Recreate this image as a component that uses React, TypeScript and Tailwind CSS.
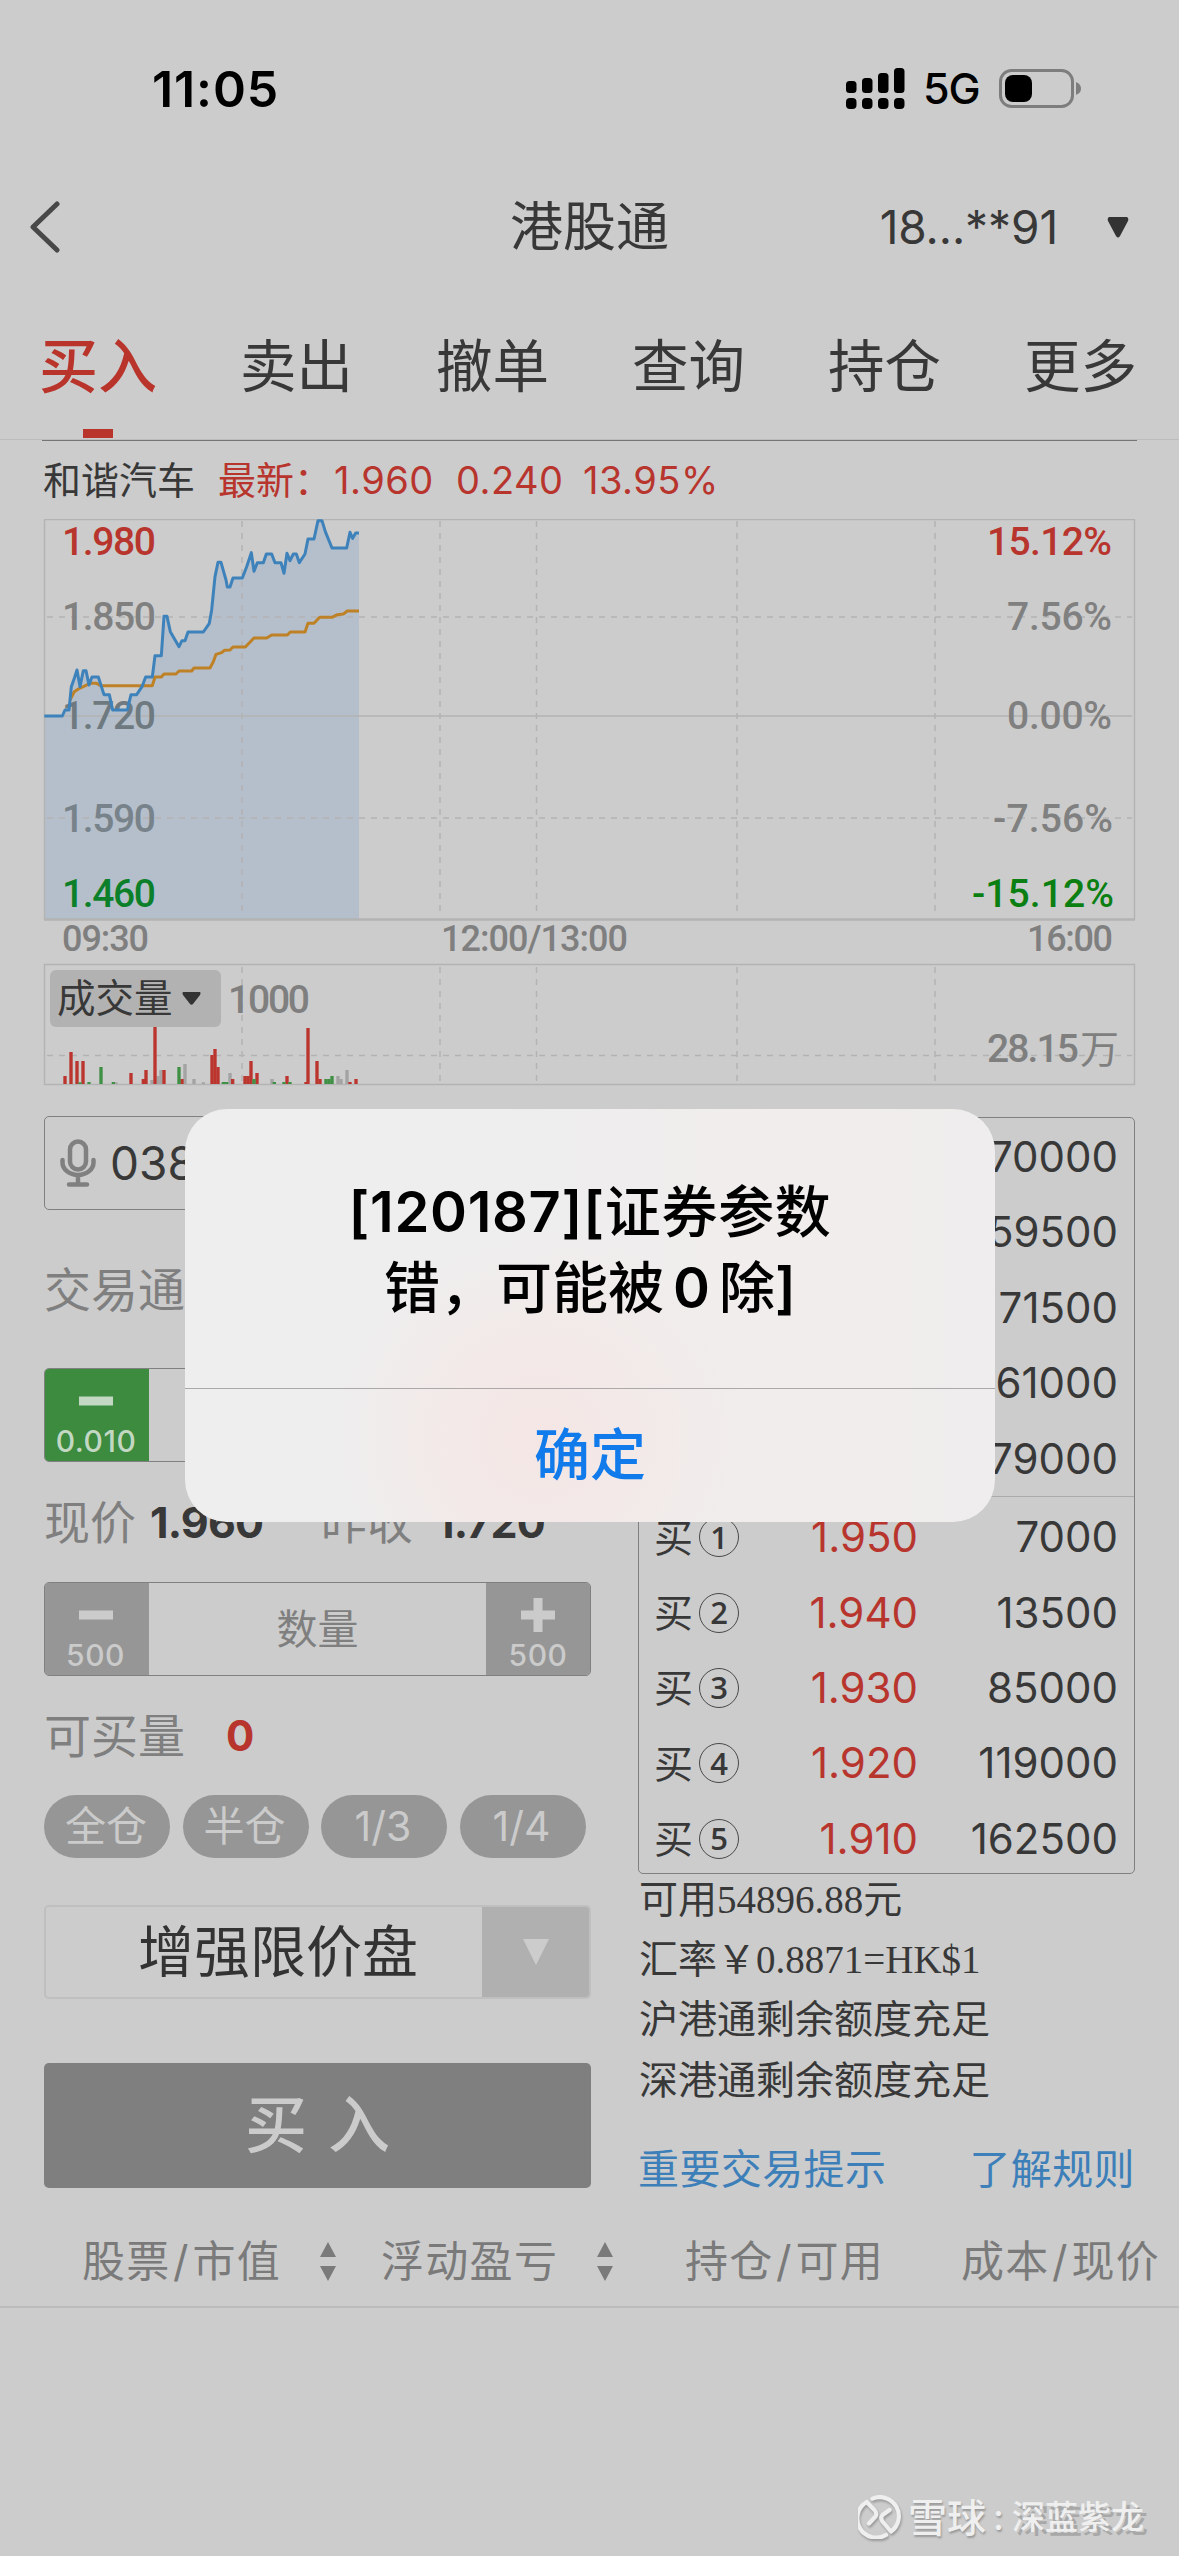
import React from "react";

const SANS = "font-['Inter','Noto_Sans_CJK_SC',sans-serif]";

const PRICE_LINE =
  "43,648 97,648 105,630 117,630 124,560 133,535 141,510 150,560 160,512 168,512 177,555 186,531 205,531 222,584 238,584 248,630 292,630 303,584 320,584 336,560 347,531 367,531 375,467 394,467 402,349 411,349 421,395 447,440 456,422 465,422 474,396 520,396 538,370 545,330 555,230 564,187 573,187 588,240 592,261 600,261 609,234 637,234 650,200 664,158 672,214 682,188 700,188 709,162 725,162 735,188 753,188 762,220 771,160 780,182 790,162 799,162 808,188 825,162 834,117 852,117 864,62 876,62 886,95 906,144 950,144 960,97 968,115 977,99 987,99";

const AVERAGE_LINE =
  "120,600 133,575 145,567 160,560 180,550 200,550 212,557 367,557 375,531 394,531 402,522 438,522 447,513 485,513 492,504 540,504 550,485 558,463 575,458 583,451 600,450 609,441 646,441 672,414 710,414 725,405 772,405 781,396 825,396 834,370 852,370 869,352 906,352 922,344 940,342 952,333 987,333";

const GREY = "#a3a3a3";
const GREEN = "#3f8f45";
const RED = "#bb352e";

const VOLUMES: [number, number, string][] = [
  [258, 547, GREY], [366, 540, GREY], [384, 528, GREY], [393, 510, GREY], [465, 492, GREY], [492, 537, GREY],
  [520, 547, GREY], [600, 519, GREY], [726, 537, GREY], [924, 528, GREY], [933, 537, GREY], [951, 510, GREY],
  [105, 528, RED], [123, 456, RED], [141, 483, RED], [159, 483, RED], [303, 519, RED], [340, 537, RED],
  [348, 510, RED], [375, 381, RED], [402, 510, RED], [456, 537, RED], [546, 465, RED], [555, 447, RED],
  [564, 501, RED], [608, 537, RED], [645, 528, RED], [654, 528, RED], [663, 483, RED], [681, 519, RED],
  [771, 528, RED], [828, 546, RED], [834, 384, RED], [861, 483, RED], [870, 537, RED], [960, 546, RED],
  [978, 537, RED],
  [150, 547, GREEN], [177, 546, GREEN], [213, 501, GREEN], [250, 546, GREEN], [447, 501, GREEN],
  [580, 546, GREEN], [590, 546, GREEN], [672, 537, GREEN], [733, 546, GREEN], [762, 546, GREEN],
  [780, 546, GREEN], [888, 537, GREEN], [897, 537, GREEN], [906, 528, GREEN],
];

// text, left, baseline, width, colour, weight
const CHART_LABELS: [string, number, number, number, string, number][] = [
  ["1.980", 62, 555, 94, "#b8352e", 500],
  ["1.850", 62, 630, 94, "#808080", 500],
  ["1.720", 62, 729, 94, "#6f7a80", 500],
  ["1.590", 62, 832, 94, "#78828a", 500],
  ["1.460", 62, 907, 94, "#0b7f2a", 500],
  ["15.12%", 987, 555, 125, "#b8352e", 500],
  ["7.56%", 1007, 630, 105, "#808080", 500],
  ["0.00%", 1007, 729, 105, "#808080", 500],
  ["-7.56%", 993, 832, 120, "#808080", 500],
  ["-15.12%", 972, 907, 142, "#0b7f12", 500],
];

function Chart() {
  return (
    <div className="relative ml-[43px] h-[567px] w-[1093px]">
      <svg className="block h-[567px] w-[1093px]" viewBox="43 519 1093 567">
        <polygon
          points={PRICE_LINE + " 987,1258 43,1258"}
          transform="translate(30 500) scale(0.33333)"
          fill="#b4bfcb"
        />
        <g fill="none" stroke="#b3b3b3" strokeWidth="1.5">
          <path d="M44.5 519.5H1134.5V920" />
          <path d="M44.5 519.5V920" />
          <path d="M44 919.5H1135" strokeWidth="2.5" />
          <path d="M44 716H1132" />
          <path d="M44.5 964.5H1134.5V1084.5H44.5Z" />
          <path
            d="M47 617H1132M47 818H1132M47 1055.5H1132M242 521V916M440 521V916M536.500 521V916M737 521V916M935 521V916M242 967V1083M440 967V1083M536.500 967V1083M737 967V1083M935 967V1083"
            strokeDasharray="6 6"
          />
        </g>
        <g fontFamily="Roboto, sans-serif" fontSize="39">
          {CHART_LABELS.map(([text, x, y, width, fill, weight]) => (
            <text key={text} x={x} y={y} textLength={width} fill={fill} fontWeight={weight}>
              {text}
            </text>
          ))}
          <g fill="#7f7f7f" fontSize="36" fontWeight="500">
            <text x="62" y="951" textLength="87">09:30</text>
            <text x="441" y="951" textLength="187">12:00/13:00</text>
            <text x="1027" y="951" textLength="86">16:00</text>
          </g>
          <text x="228" y="1013" textLength="82" fill="#7f7f7f" fontWeight="500">1000</text>
          <text x="987" y="1062" textLength="92" fill="#7f7f7f" fontWeight="500">28.15</text>
          <text x="1080" y="1063" fill="#7f7f7f" fontFamily="'Noto Sans CJK SC', sans-serif" fontSize="39">万</text>
        </g>
        <g transform="translate(30 500) scale(0.33333)" fill="none" strokeLinejoin="round">
          <polyline points={AVERAGE_LINE} stroke="#bf8126" strokeWidth="9" />
          <polyline points={PRICE_LINE} stroke="#3d82bb" strokeWidth="9" />
        </g>
        <g transform="translate(30 900) scale(0.33333)">
          {VOLUMES.map(([x, y, fill], i) => (
            <rect key={i} x={x - 5} y={y} width="10" height={552 - y} fill={fill} />
          ))}
        </g>
      </svg>
      <div className="absolute left-[7px] top-[451px] flex h-[57px] w-[171px] items-center rounded-md bg-[#b2b2b2] pl-[7px]">
        <span className="text-[38.5px] leading-none text-[#383838]">成交量</span>
        <svg className="ml-[9px] h-[13px] w-[19px]" viewBox="0 0 19 13">
          <path d="M1 0H18Q19 1 18 3L11 12Q9.500 13.500 8 12L1 3Q0 1 1 0Z" fill="#333" />
        </svg>
      </div>
    </div>
  );
}

function StepperButton({ sign, step, className }: { sign: "+" | "-"; step: string; className: string }) {
  return (
    <div className={"flex w-[104px] flex-col items-center " + className}>
      <svg className="mt-[15px] h-[34px] w-[34px]" viewBox="0 0 34 34" fill="currentColor">
        <rect x="0" y="12.500" width="34" height="9" />
        {sign === "+" && <rect x="12.500" y="0" width="9" height="34" />}
      </svg>
      <span className="mt-[8px] text-[30px] leading-[30px] tracking-[0.5px] font-medium">{step}</span>
    </div>
  );
}

function Pill({ children }: { children: React.ReactNode }) {
  return (
    <div className="flex h-[63px] w-[126px] items-center justify-center rounded-full bg-[#969696] pr-[2px] text-[41px] leading-none text-[#cbcbcb]">
      {children}
    </div>
  );
}

function OrderForm() {
  return (
    <div className="w-[547px] text-[#7f7f7f]">
      <div className="flex h-[94px] items-center rounded-[5px] border border-[#808080]">
        <svg className="ml-[15px] h-[48px] w-[36px]" viewBox="0 0 36 48" fill="none" stroke="#808080" strokeWidth="4.500" strokeLinecap="round">
          <rect x="10" y="2.500" width="16" height="28" rx="8" />
          <path d="M2.500 21v2.500a15.500 12.500 0 0 0 31 0V21M18 37v8M9 45.500H27" />
        </svg>
        <span className="ml-[14px] text-[46px] leading-none text-[#383838]">038</span>
      </div>
      <div className="flex h-[158px] items-center text-[47px] leading-none">交易通</div>
      <div className="flex h-[94px] overflow-hidden rounded-[5px] border border-[#808080]">
        <StepperButton sign="-" step="0.010" className="bg-[#3d8b3f] pr-[2px] text-[#c3d8c3]" />
      </div>
      <div className="flex h-[120px] items-center text-[46px] leading-none">
        <span>现价</span>
        <span className="ml-[14px] w-[171px] text-[43px] font-bold tracking-[-0.8px] text-[#383838]">1.960</span>
        <span>昨收</span>
        <span className="ml-[23px] text-[43px] font-bold tracking-[-0.8px] text-[#383838]">1.720</span>
      </div>
      <div className="flex h-[94px] overflow-hidden rounded-[5px] border border-[#808080]">
        <StepperButton sign="-" step="500" className="bg-[#969696] pr-[3px] text-[#cbcbcb]" />
        <div className="flex flex-1 items-center justify-center text-[41px] leading-none">数量</div>
        <StepperButton sign="+" step="500" className="bg-[#969696] text-[#cbcbcb]" />
      </div>
      <div className="flex h-[119px] items-center text-[47px] leading-none">
        <span>可买量</span>
        <span className="ml-[41px] text-[42px] font-bold text-[#b8352e]">0</span>
      </div>
      <div className="flex gap-[12.500px]">
        <Pill>全仓</Pill>
        <Pill>半仓</Pill>
        <Pill>1/3</Pill>
        <Pill>1/4</Pill>
      </div>
      <div className="mt-[47px] flex h-[94px] overflow-hidden rounded-[5px] border-2 border-[#bfbfbf]">
        <div className="flex flex-1 items-center justify-center pl-[28px] text-[56px] leading-none text-[#333]">增强限价盘</div>
        <div className="flex w-[107px] items-center justify-center bg-[#b0b0b0]">
          <svg className="h-[26px] w-[26px]" viewBox="0 0 26 26">
            <path d="M0 0H26L13 26Z" fill="#cccccc" />
          </svg>
        </div>
      </div>
      <div className="mt-[64px] flex h-[125px] items-center justify-center gap-[21px] rounded-[5px] bg-[#7f7f7f] text-[62px] font-medium leading-none text-[#cbcbcb]">
        <span>买</span>
        <span>入</span>
      </div>
    </div>
  );
}

const BIDS = [
  ["1", "1.950", "7000"],
  ["2", "1.940", "13500"],
  ["3", "1.930", "85000"],
  ["4", "1.920", "119000"],
  ["5", "1.910", "162500"],
];

function OrderBook() {
  return (
    <div className="w-[497px] text-[#383838]">
      <div className="mt-px h-[757px] rounded-[5px] border-[1.5px] border-[#808080] text-[42px] leading-none">
        {["70000", "59500", "71500", "61000", "79000"].map((v) => (
          <div key={v} className="flex h-[75.5px] items-center justify-end pr-[16px] pt-[2px]">{v}</div>
        ))}
        <div className="mb-[3px] h-px bg-[#aaaaaa]" />
        {BIDS.map(([level, price, volume]) => (
          <div key={level} className="flex h-[75.4px] items-center pl-[15px] pr-[16px]">
            <span className="text-[39px]">买</span>
            <span className="ml-[6px] flex h-[40px] w-[40px] items-center justify-center rounded-full border-[1.5px] border-[#484848] font-['Open_Sans',sans-serif] text-[31px] font-semibold leading-none">
              {level}
            </span>
            <span className="w-[179px] text-right text-[#b8352e]">{price}</span>
            <span className="flex-1 text-right">{volume}</span>
          </div>
        ))}
      </div>
      <div className="-mt-[4px] pl-[1px] font-['Liberation_Serif','Noto_Sans_CJK_SC',serif] text-[39px] leading-[60.200px]">
        <p>可用54896.88元</p>
        <p>汇率￥0.8871=HK$1</p>
        <p>沪港通剩余额度充足</p>
        <p>深港通剩余额度充足</p>
      </div>
      <div className="flex h-[79px] items-end justify-between text-[41px] leading-[41px] text-[#3d7fb9]">
        <span className="tracking-[0.4px]">重要交易提示</span>
        <span className="tracking-[0.4px]">了解规则</span>
      </div>
    </div>
  );
}

function SortArrows() {
  return (
    <svg className="h-[39px] w-[16px]" viewBox="0 0 16 39" fill="#7a7a7a">
      <path d="M8 0L16 15H0ZM8 39L0 24H16Z" />
    </svg>
  );
}

function Slash() {
  return <span className="mx-[2.500px]">/</span>;
}

function StatusBar() {
  return (
    <div className="flex h-[177px] items-center text-black">
      <span className="ml-[152px] w-[694px] shrink-0 text-[50px] font-semibold leading-none tracking-[0.9px]">11:05</span>
      <svg className="h-[41px] w-[59px] shrink-0" viewBox="0 0 59 41">
        {[13, 10, 5, 0].map((top, i) => (
          <g key={i}>
            <rect x={i * 16} y={top} width="10.500" height={25 - top} rx="3.500" />
            <rect x={i * 16} y="30" width="10.500" height="11" rx="4" />
          </g>
        ))}
      </svg>
      <span className="ml-[18px] w-[76px] shrink-0 text-[43px] font-medium leading-none tracking-[-1px]">5G</span>
      <svg className="h-[39px] w-[83px] shrink-0" viewBox="0 0 83 39">
        <rect x="1.500" y="1.500" width="72" height="36" rx="11" fill="none" stroke="#7d7d7d" strokeWidth="3" />
        <rect x="6" y="6" width="27" height="27" rx="8" />
        <path d="M77 13Q82 15 82 19.500T77 26Z" fill="#7d7d7d" />
      </svg>
    </div>
  );
}

function Dialog() {
  return (
    <div className="absolute left-[185px] top-[1109px] h-[413px] w-[810px] overflow-hidden rounded-[42px] bg-[#efeeee] bg-[radial-gradient(circle_at_355px_330px,#f4e6e4_0,#f2eae9_110px,transparent_210px),linear-gradient(90deg,#eeeeee_40%,#f1edec_75%,#efeded)] text-center">
      <div className="flex h-[280px] flex-col items-center justify-center border-b border-[#aaa8a8] text-[56px] font-medium leading-[76px] text-black">
        <p className="mt-[2px] tracking-[0.7px]">
          <span className="font-semibold">[120187][</span>证券参数
        </p>
        <p>
          错，可能被<span className="mx-[9px] font-semibold">0</span>除<span className="font-semibold">]</span>
        </p>
      </div>
      <div className="flex h-[132px] items-center justify-center text-[56px] font-medium leading-none text-[#127beb]">确定</div>
    </div>
  );
}

function Watermark() {
  return (
    <div className="absolute left-[858px] top-[2495px] flex h-[44px] items-center text-[#efefef]">
      <svg className="h-[44px] w-[44px] [filter:drop-shadow(1px_2px_1px_#999)]" viewBox="0 0 44 44" fill="none" stroke="currentColor" strokeWidth="4.200" strokeLinecap="round" strokeLinejoin="round">
        <path d="M28 40A19 19 0 0 1 8.700 7L16.500 15Q19.500 18.500 17.500 21.500L11 28.500" />
        <path d="M14.500 3.600A19 19 0 0 1 33 36.500L24.500 26.500Q22 23 24.500 20L31.500 15" />
      </svg>
      <span className="ml-[6px] text-[39px] font-medium leading-none [text-shadow:1px_2px_2px_#999]">雪球</span>
      <span className="ml-[7px] w-[19px] text-[36px] font-medium leading-none [text-shadow:1px_2px_2px_#999]">:</span>
      <span className="text-[33px] font-medium leading-none [text-shadow:4px_4px_0_#a8a8a8]">深蓝紫龙</span>
    </div>
  );
}

export default function App() {
  return (
    <div className={"relative h-[2556px] w-[1179px] overflow-hidden bg-[#cccccc] " + SANS}>
      <StatusBar />
      <div className="grid h-[98px] grid-cols-[1fr_160px_1fr] items-center pt-[2px] leading-none text-[#383838]">
        <svg className="ml-[29px] h-[52px] w-[32px]" viewBox="0 0 32 52" fill="none" stroke="#484848" strokeWidth="5" strokeLinecap="round" strokeLinejoin="round">
          <path d="M28 3L4 26L28 49" />
        </svg>
        <span className="text-center text-[53px]">港股通</span>
        <div className="flex items-center justify-end pr-[50px]">
          <span className="mr-[49px] text-[46px] tracking-[-0.1px]">18...**91</span>
          <svg className="h-[21px] w-[22px]" viewBox="0 0 22 21">
            <path d="M2 0H20Q22 1 21 4L13 19Q11 22 9 19L1 4Q0 1 2 0Z" fill="#333" />
          </svg>
        </div>
      </div>

      <div className="flex h-[165px] items-start justify-between border-b border-[#bdbdbd] pl-[39px] pr-[42px] pt-[62px] text-[56.500px] leading-[60px] text-[#383838]">
        <div className="flex flex-col items-center font-medium text-[#b9352c]">
          <span className="text-[59px]">买入</span>
          <span className="mt-[32px] h-[9px] w-[30px] bg-[#b9352c]" />
        </div>
        <span>卖出</span>
        <span>撤单</span>
        <span>查询</span>
        <span>持仓</span>
        <span>更多</span>
      </div>
      <div className="ml-[42px] h-px w-[1095px] bg-[#757575]" />

      <div className="flex h-[78px] items-center pl-[43px] text-[38px] leading-none text-[#b8352e]">
        <span className="w-[175px] text-[#383838]">和谐汽车</span>
        <span className="w-[116px]">最新：</span>
        <span className="w-[122px] tracking-[0.5px]">1.960</span>
        <span className="w-[127px] tracking-[0.5px]">0.240</span>
        <span className="tracking-[0.5px]">13.95%</span>
      </div>

      <Chart />

      <div className="mt-[30px] flex h-[1072px] pl-[44px]">
        <OrderForm />
        <div className="ml-[47px]">
          <OrderBook />
        </div>
      </div>

      <div className="mt-[28px] flex h-[92px] items-center border-b-2 border-[#bcbcbc] pl-[82px] text-[43px] leading-none tracking-[1.300px] text-[#7a7a7a]">
        <span className="w-[238px] shrink-0">股票<Slash />市值</span>
        <SortArrows />
        <span className="ml-[45px] w-[216px] shrink-0">浮动盈亏</span>
        <SortArrows />
        <span className="ml-[72px] w-[276px] shrink-0">持仓<Slash />可用</span>
        <span className="whitespace-nowrap">成本<Slash />现价</span>
      </div>

      <Watermark />
      <Dialog />
    </div>
  );
}
